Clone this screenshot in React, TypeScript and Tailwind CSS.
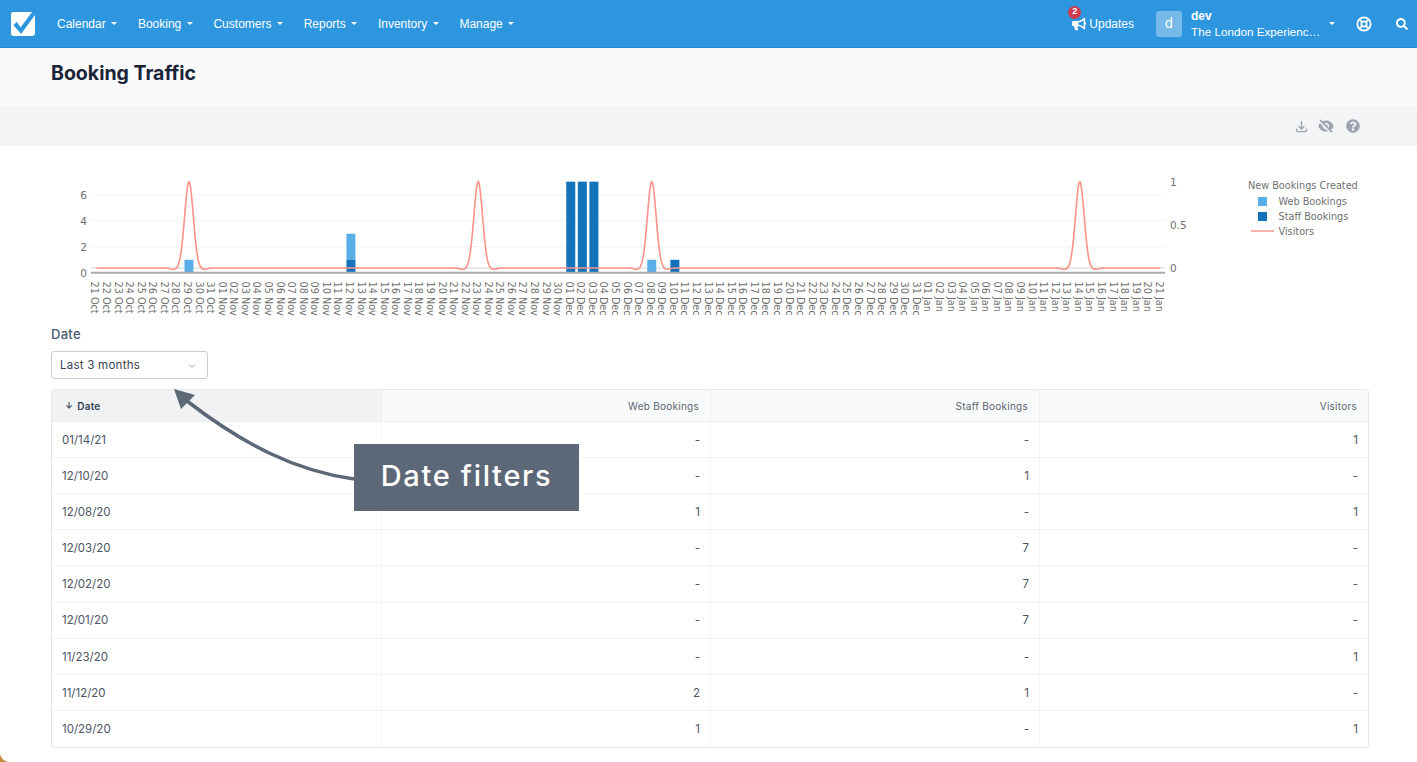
import { FaBullhorn, FaQuestionCircle, FaSearch } from "react-icons/fa"
import { HiEyeOff, HiOutlineDownload } from "react-icons/hi"
import { ChevronDown, LifeBuoy } from "lucide-react"

const navItems = ["Calendar", "Booking", "Customers", "Reports", "Inventory", "Manage"]

const rows = [
  ["01/14/21", "-", "-", "1"],
  ["12/10/20", "-", "1", "-"],
  ["12/08/20", "1", "-", "1"],
  ["12/03/20", "-", "7", "-"],
  ["12/02/20", "-", "7", "-"],
  ["12/01/20", "-", "7", "-"],
  ["11/23/20", "-", "-", "1"],
  ["11/12/20", "2", "1", "-"],
  ["10/29/20", "1", "-", "1"],
]

// chart geometry, in page pixels
const dayX = (d: number) => 96.4 + d * 11.57
const barY = (v: number) => 272.8 - v * 13.02
const spikes = [8, 33, 48, 85]

const months = [
  { name: "Oct", from: 21, to: 31 },
  { name: "Nov", from: 1, to: 30 },
  { name: "Dec", from: 1, to: 31 },
  { name: "Jan", from: 1, to: 21 },
]
const dayLabels = months.flatMap((m) => {
  const out: string[] = []
  for (let i = m.from; i <= m.to; i++) out.push(`${String(i).padStart(2, "0")} ${m.name}`)
  return out
})

// bell with a small dip either side, one sample per pixel
function visitorsPath() {
  const start = dayX(0)
  const end = dayX(92)
  let p = `M${start.toFixed(1)} 268`
  for (let x = start + 1; x <= end; x += 1) {
    let y = 268
    for (const s of spikes) {
      const dx = Math.abs(x - dayX(s))
      y -= 86.5 * Math.exp(-(dx * dx) / (2 * 4.3 * 4.3))
      y += 1.5 * Math.exp(-((dx - 14.5) * (dx - 14.5)) / (2 * 3.5 * 3.5))
    }
    p += `L${x.toFixed(1)} ${y.toFixed(2)}`
  }
  return p
}

const bars = [
  { d: 8, from: 0, to: 1, fill: "#5aaee8" },
  { d: 22, from: 1, to: 3, fill: "#5aaee8" },
  { d: 22, from: 0, to: 1, fill: "#1272ba" },
  { d: 41, from: 0, to: 7, fill: "#1272ba" },
  { d: 42, from: 0, to: 7, fill: "#1272ba" },
  { d: 43, from: 0, to: 7, fill: "#1272ba" },
  { d: 48, from: 0, to: 1, fill: "#5aaee8" },
  { d: 50, from: 0, to: 1, fill: "#1272ba" },
]

function Caret() {
  return <span className="inline-block h-0 w-0 border-x-[3px] border-t-[3px] border-x-transparent border-t-white" />
}

function Logo() {
  return (
    <svg className="mt-[1px]" width="24" height="24" viewBox="0 0 25 25">
      <rect x="0" y="0" width="25" height="25" rx="2.5" fill="#fff" />
      <path d="M2.5 13.5 L6 10.5 L10 16 L22 0 L25 0 L25 3 L10.5 23 Z" fill="#2d96df" />
    </svg>
  )
}

function Navbar() {
  return (
    <div className="flex h-12 items-center border-b border-[#2788cd] bg-[#2d96df] pl-[11px] text-[12px] text-white">
      <Logo />
      <div className="ml-[22px] flex items-center gap-[20.6px]">
        {navItems.map((n) => (
          <div key={n} className="flex items-center gap-[5.6px]">
            <span>{n}</span>
            <Caret />
          </div>
        ))}
      </div>
      <div className="ml-auto flex items-center">
        <div className="relative flex items-center gap-[3px]">
          <FaBullhorn className="h-[14px] w-[14px] text-white" />
          <span>Updates</span>
          <span className="absolute left-[-4px] top-[-9px] flex h-[13px] w-[13px] items-center justify-center rounded-full bg-[#d03b4e] text-[9px] font-bold">2</span>
        </div>
        <div className="ml-[22px] flex h-[26px] w-[26px] items-center justify-center rounded-[3px] bg-white/35 text-[14px]">d</div>
        <div className="ml-[9px] flex w-[128px] flex-col whitespace-nowrap leading-[16px]">
          <span className="font-bold">dev</span>
          <span className="text-[11.7px]">The London Experienc…</span>
        </div>
        <span className="ml-[10px] flex"><Caret /></span>
        <LifeBuoy className="ml-[21px] h-[16px] w-[16px]" strokeWidth={2.6} />
        <FaSearch className="ml-[24px] mr-[9px] h-[12px] w-[12px]" />
      </div>
    </div>
  )
}

function TrafficChart() {
  return (
    <svg className="mt-[14px] block" width="1318" height="160" viewBox="51 160 1318 160">
      {[194.7, 220.7, 246.7].map((y) => (
        <line key={y} x1="91" x2="1165" y1={y} y2={y} stroke="#f4f4f4" strokeWidth="1.2" />
      ))}
      <line x1="91" x2="1165" y1="268" y2="268" stroke="#d4d4d4" strokeWidth="1" />
      {bars.map((b) => (
        <rect key={`${b.d}-${b.from}`} x={dayX(b.d) - 4.5} width="9" y={barY(b.to)} height={barY(b.from) - barY(b.to)} fill={b.fill} />
      ))}
      <line x1="91" x2="1165" y1="272.8" y2="272.8" stroke="#adadad" strokeWidth="2" />
      <path d={visitorsPath()} fill="none" stroke="#fb9389" strokeWidth="1.6" />
      <g fontFamily="'DejaVu Sans', sans-serif" fontSize="10.5" fill="#707070">
        {[["6", 198.5], ["4", 224.5], ["2", 250.5], ["0", 276.5]].map(([t, y]) => (
          <text key={t} x="87" y={y} textAnchor="end">{t}</text>
        ))}
        {[["1", 185.5], ["0.5", 229], ["0", 272]].map(([t, y]) => (
          <text key={t} x="1170" y={y}>{t}</text>
        ))}
      </g>
      <g fontFamily="'DejaVu Sans', sans-serif" fontSize="9.7" fill="#707070">
        {dayLabels.map((l, d) => (
          <text key={l} transform={`translate(${dayX(d) - 5} 281.5) rotate(90)`}>{l}</text>
        ))}
        <text x="1248" y="189">New Bookings Created</text>
        <text x="1278.5" y="205">Web Bookings</text>
        <text x="1278.5" y="220">Staff Bookings</text>
        <text x="1278.5" y="235">Visitors</text>
      </g>
      <rect x="1258" y="197" width="9" height="9" fill="#5aaee8" />
      <rect x="1258" y="212" width="9" height="9" fill="#1272ba" />
      <line x1="1251" x2="1274" y1="231" y2="231" stroke="#fb9389" strokeWidth="1.4" />
    </svg>
  )
}

function BookingsTable() {
  return (
    <div className="mt-[10px] overflow-hidden rounded-[3px] border border-[#e5e7eb] font-['Inter',sans-serif] text-[11.5px] text-[#4b5563]">
      <div className="grid h-[32px] grid-cols-4 border-b border-[#eceef0] bg-[#f9fafb] text-[10px] tracking-[0.25px] text-[#5b6472]">
        <div className="flex items-center gap-[4px] bg-[#f1f2f4] pl-[13px] pt-[1px] font-semibold text-[#374151]">
          <span className="text-[9px]">↓</span>
          <span>Date</span>
        </div>
        <div className="flex items-center justify-end border-l border-[#eceef0] pr-[11px] pt-[1px]">Web Bookings</div>
        <div className="flex items-center justify-end border-l border-[#eceef0] pr-[11px] pt-[1px]">Staff Bookings</div>
        <div className="flex items-center justify-end border-l border-[#eceef0] pr-[11px] pt-[1px]">Visitors</div>
      </div>
      {rows.map((r) => (
        <div key={r[0]} className="grid h-[36.12px] grid-cols-4 border-b border-[#f1f2f4] last:border-b-0">
          <div className="flex items-center pl-[10px] pt-[2px]">{r[0]}</div>
          {r.slice(1).map((v, i) => (
            <div key={i} className="flex items-center justify-end border-l border-[#f5f6f7] pr-[10px] pt-[2px]">{v}</div>
          ))}
        </div>
      ))}
    </div>
  )
}

export default function App() {
  return (
    <div className="relative h-[762px] overflow-hidden bg-white font-['Liberation_Sans',sans-serif]">
      <Navbar />
      <div className="flex h-[59px] bg-[#fafafa] pl-[51px] pt-[12px]">
        <h1 className="font-['Inter',sans-serif] text-[19.5px] font-bold leading-[27px] text-[#1a2438]">Booking Traffic</h1>
      </div>
      <div className="flex h-[39px] items-center justify-end gap-[12px] bg-[#f3f4f6] pb-[1px] pr-[57px] text-[#9ca3af]">
        <HiOutlineDownload className="mr-[-3px] h-[15px] w-[15px]" />
        <HiEyeOff className="h-[16px] w-[16px]" />
        <FaQuestionCircle className="h-[14px] w-[14px]" />
      </div>
      <div className="pl-[51px] pr-[48px]">
        <TrafficChart />
        <div className="mt-[4px] font-['Inter',sans-serif] text-[13px] font-medium leading-[20px] tracking-[0.3px] text-[#4a5b73]">Date</div>
        <div className="mt-[7px] flex h-[28px] w-[157px] items-center justify-between rounded-[3px] border border-[#c9ced6] pl-[8px] pr-[10px] pt-[2px] font-['Inter',sans-serif] text-[11.5px] tracking-[0.25px] text-[#374151]">
          <span>Last 3 months</span>
          <ChevronDown className="h-[10px] w-[10px] text-[#8a93a0]" />
        </div>
        <BookingsTable />
      </div>

      {/* annotation on top of the screenshot */}
      <svg className="pointer-events-none absolute left-0 top-0" width="1417" height="762">
        <path d="M354 479 C296 471 244 445 187 401" fill="none" stroke="#5c6778" strokeWidth="3.5" />
        <path d="M174 389 L195 395 L181 409 Z" fill="#5c6778" />
      </svg>
      <div className="absolute left-[354px] top-[444px] flex h-[67px] w-[225px] items-center justify-center bg-[#5c6778] pb-[3px] font-['Inter',sans-serif] text-[29px] font-medium tracking-[1.7px] text-white">
        Date filters
      </div>
      <svg className="absolute bottom-0 left-0" width="9" height="9">
        <path d="M0 0 A9 9 0 0 0 9 9 L0 9 Z" fill="#c48a3e" />
      </svg>
    </div>
  )
}
